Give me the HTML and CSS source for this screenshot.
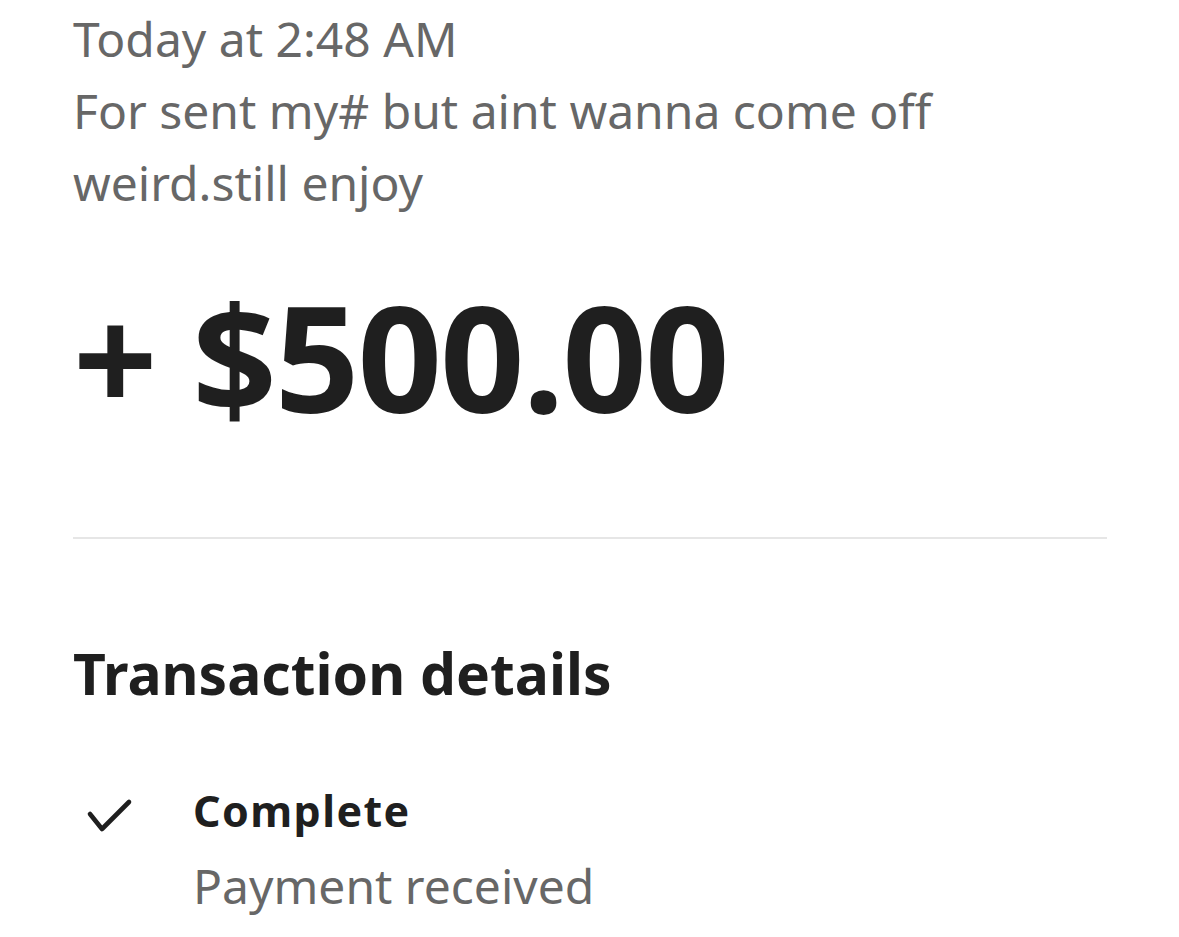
FILE: index.html
```html
<!DOCTYPE html>
<html>
<head>
<meta charset="utf-8">
<link rel="stylesheet" href="styles.css">
</head>
<body>
<main class="screen">
  <section class="header">
    <p class="meta">Today at 2:48 AM</p>
    <p class="note">For sent my# but aint wanna come off weird.still enjoy</p>
    <h1 class="amount">+ $500.00</h1>
  </section>
  <hr class="divider">
  <section class="details">
    <h2 class="details-title">Transaction details</h2>
    <div class="status-row">
      <svg class="check" viewBox="0 0 52 44" width="52" height="44" aria-hidden="true">
        <path d="M6 19 L18 34 L45 7" fill="none" stroke="#1f1f1f" stroke-width="4.6" stroke-linecap="round" stroke-linejoin="round"/>
      </svg>
      <div class="status-text">
        <div class="status-title">Complete</div>
        <div class="status-sub">Payment received</div>
      </div>
    </div>
  </section>
</main>
</body>
</html>
```

FILE: styles.css
```css
* { box-sizing: border-box; }
html, body {
  margin: 0;
  padding: 0;
  background: #ffffff;
}
body {
  font-family: "Noto Sans", "Liberation Sans", sans-serif;
  color: #1f1f1f;
  overflow: hidden;
}
.screen {
  padding: 3px 72px 0 73px;
  width: 1179px;
  height: 937px;
}
.header {
  display: flex;
  flex-direction: column;
}
.meta, .note {
  margin: 0;
  font-size: 48px;
  line-height: 72px;
  color: #676767;
  font-weight: 400;
  width: 900px;
}
.amount {
  margin: 57px 0 0 0;
  font-size: 148px;
  line-height: 160px;
  font-weight: 700;
  letter-spacing: -2px;
  color: #1f1f1f;
}
.divider {
  margin: 101px 0 0 0;
  border: none;
  height: 2px;
  background: #e6e6e6;
  width: 1034px;
}
.details-title {
  margin: 99px 0 0 0;
  font-size: 57px;
  line-height: 70px;
  font-weight: 700;
  color: #1f1f1f;
}
.status-row {
  display: flex;
  gap: 57px;
  margin-top: 75px;
  align-items: flex-start;
}
.check {
  margin: 12px 0 0 11px;
  flex: none;
}
.status-text {
  display: flex;
  flex-direction: column;
}
.status-title {
  font-size: 43px;
  line-height: 56px;
  font-weight: 700;
  letter-spacing: 1.4px;
  color: #1f1f1f;
}
.status-sub {
  margin-top: 11px;
  font-size: 48px;
  line-height: 72px;
  color: #676767;
}
```
